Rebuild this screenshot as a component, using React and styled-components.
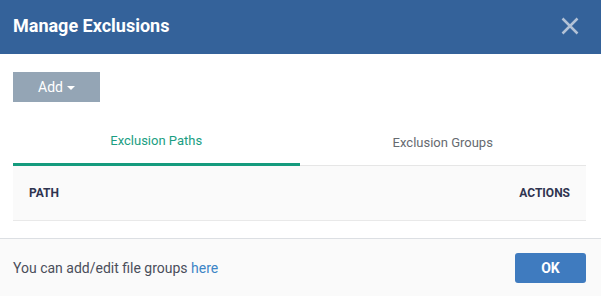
import React, { useState } from "react";
import styled, { createGlobalStyle } from "styled-components";

const GlobalStyle = createGlobalStyle`
  body {
    margin: 0;
    font-family: Roboto, "Liberation Sans", Arial, sans-serif;
    background: #fff;
  }
`;

const App = () => {
  const [tab, setTab] = useState("paths");

  return (
    <>
      <GlobalStyle />
      <Modal>
        <Header>
          <Title>Manage Exclusions</Title>
          <CloseButton aria-label="Close">
            <svg width="18" height="18" viewBox="0 0 18 18">
              <path d="M1.5 1.5 L16.5 16.5 M16.5 1.5 L1.5 16.5" stroke="#b3c2d6" strokeWidth="2.5" />
            </svg>
          </CloseButton>
        </Header>
        <Body>
          <AddButton>
            Add <Caret />
          </AddButton>
          <Tabs>
            <Tab $active={tab === "paths"} onClick={() => setTab("paths")}>
              Exclusion Paths
            </Tab>
            <Tab $active={tab === "groups"} onClick={() => setTab("groups")}>
              Exclusion Groups
            </Tab>
          </Tabs>
          <TableHead>
            <HeadCell>PATH</HeadCell>
            <HeadCell>ACTIONS</HeadCell>
          </TableHead>
        </Body>
        <Footer>
          <Note>
            You can add/edit file groups <Link href="#">here</Link>
          </Note>
          <OkButton>OK</OkButton>
        </Footer>
      </Modal>
    </>
  );
};

const Modal = styled.div`
  width: 601px;
  height: 296px;
  display: flex;
  flex-direction: column;
  background: #fff;
  overflow: hidden;
`;

const Header = styled.div`
  height: 54px;
  flex-shrink: 0;
  background-color: #34629a;
  display: flex;
  align-items: center;
  justify-content: space-between;
  padding: 0 18px 0 13px;
  box-sizing: border-box;
`;

const Title = styled.h2`
  margin: 0 0 4px;
  color: #fff;
  font-size: 18px;
  font-weight: 700;
`;

const CloseButton = styled.button`
  background: none;
  border: none;
  padding: 0;
  width: 26px;
  height: 26px;
  display: flex;
  align-items: center;
  justify-content: center;
  cursor: pointer;
  margin-bottom: 3px;
`;

const Body = styled.div`
  padding: 18px 15px 17px 13px;
  flex: 1;
  display: flex;
  flex-direction: column;
`;

const AddButton = styled.button`
  width: 87px;
  height: 30px;
  background-color: #94a5b5;
  color: #fff;
  border: none;
  border-radius: 0;
  font-family: inherit;
  font-size: 14px;
  display: flex;
  align-items: center;
  justify-content: center;
  gap: 4px;
  padding: 0;
  cursor: pointer;
`;

const Caret = styled.span`
  width: 0;
  height: 0;
  border-left: 4px solid transparent;
  border-right: 4px solid transparent;
  border-top: 4px solid #fff;
  margin-top: 1px;
`;

const Tabs = styled.div`
  display: grid;
  grid-template-columns: 1fr 1fr;
  margin-top: 16px;
`;

const Tab = styled.div`
  height: 48px;
  display: flex;
  align-items: center;
  justify-content: center;
  font-size: 13px;
  color: ${(p) => (p.$active ? "#1a9e82" : "#666a70")};
  border-bottom: ${(p) => (p.$active ? "3px solid #149b7d" : "1px solid #e6e6e6")};
  box-sizing: border-box;
  padding-top: ${(p) => (p.$active ? "0" : "2px")};
  cursor: pointer;
`;

const TableHead = styled.div`
  height: 55px;
  background-color: #fafafa;
  border-bottom: 1px solid #e9e9e9;
  box-sizing: border-box;
  display: flex;
  align-items: center;
  justify-content: space-between;
  padding: 0 16px;
`;

const HeadCell = styled.span`
  font-size: 12px;
  font-weight: 700;
  color: #2f3450;
`;

const Footer = styled.div`
  height: 58px;
  flex-shrink: 0;
  border-top: 1px solid #dcdfe3;
  background-color: #fafafa;
  box-sizing: border-box;
  display: flex;
  align-items: center;
  justify-content: space-between;
  padding: 0 15px 0 13px;
`;

const Note = styled.span`
  font-size: 14px;
  color: #4a4e5a;
`;

const Link = styled.a`
  color: #3d85c6;
  text-decoration: none;
`;

const OkButton = styled.button`
  width: 71px;
  height: 30px;
  background-color: #3f7bbf;
  color: #fff;
  border: none;
  border-radius: 3px;
  font-family: inherit;
  font-size: 14px;
  font-weight: 700;
  cursor: pointer;
`;

export default App;
